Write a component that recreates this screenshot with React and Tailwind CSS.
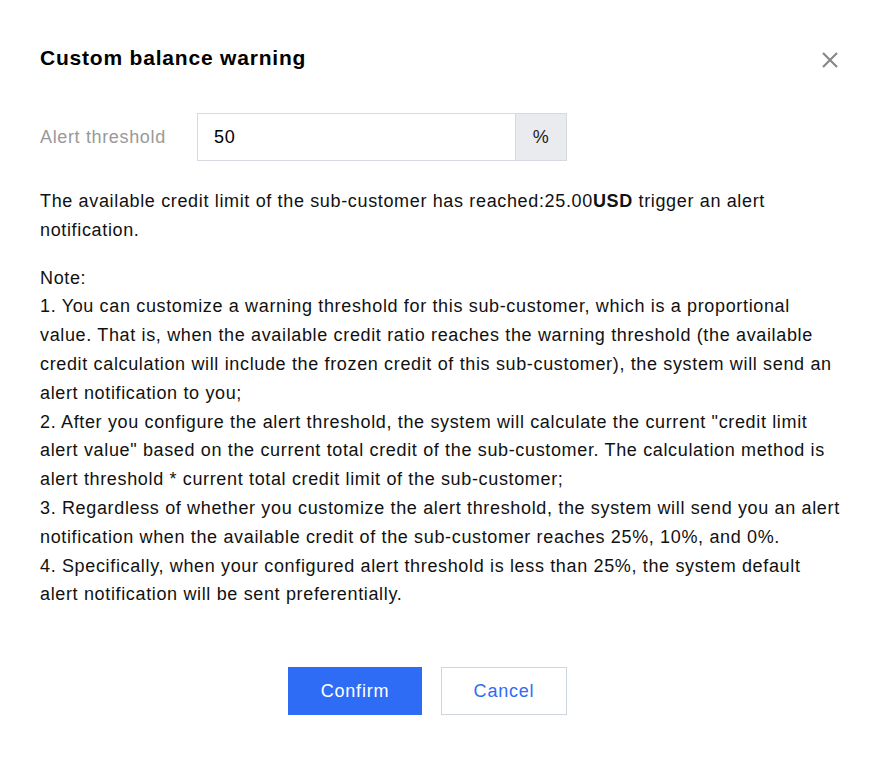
import React from "react";

const font = { fontFamily: '"Liberation Sans", Arial, Helvetica, sans-serif' };

export default function App() {
  const line = "block whitespace-nowrap";
  return (
    <div className="w-[876px] h-[776px] bg-white text-[#000] relative tracking-[0.65px]" style={font}>
      <div className="pt-[43px] pl-[40px] pr-[61px]">
        <div className="text-[21px] font-bold leading-[30px] text-black tracking-[0.8px]">Custom balance warning</div>

        <div className="mt-[40px] flex items-center h-[48px]">
          <div className="w-[157px] text-[18px] text-[#999]">Alert threshold</div>
          <div className="flex h-[48px] w-[370px] border border-[#d6dae0]">
            <div className="flex-1 flex items-center pl-[16px] text-[18px] text-black bg-white">50</div>
            <div className="w-[51px] flex items-center justify-center bg-[#e9ebee] border-l border-[#d6dae0] text-[18px] text-[#222]">%</div>
          </div>
        </div>

        <div className="mt-[26px] text-[18px] leading-[28.8px] text-[#111]">
          <span className={line}>
            The available credit limit of the sub-customer has reached:25.00<b>USD</b> trigger an alert
          </span>
          <span className={line}>notification.</span>
        </div>

        <div className="mt-[19px] text-[18px] leading-[28.8px] text-[#111]">
          <span className={line}>Note:</span>
          <span className={line}>1. You can customize a warning threshold for this sub-customer, which is a proportional</span>
          <span className={line}>value. That is, when the available credit ratio reaches the warning threshold (the available</span>
          <span className={line}>credit calculation will include the frozen credit of this sub-customer), the system will send an</span>
          <span className={line}>alert notification to you;</span>
          <span className={line}>2. After you configure the alert threshold, the system will calculate the current "credit limit</span>
          <span className={line}>alert value" based on the current total credit of the sub-customer. The calculation method is</span>
          <span className={line}>alert threshold * current total credit limit of the sub-customer;</span>
          <span className={line}>3. Regardless of whether you customize the alert threshold, the system will send you an alert</span>
          <span className={line}>notification when the available credit of the sub-customer reaches 25%, 10%, and 0%.</span>
          <span className={line}>4. Specifically, when your configured alert threshold is less than 25%, the system default</span>
          <span className={line}>alert notification will be sent preferentially.</span>
        </div>

        <div className="mt-[58px] flex justify-center gap-[19px]">
          <button className="w-[134px] h-[48px] bg-[#2f6cf5] text-white text-[18px] tracking-[0.8px]">Confirm</button>
          <button className="w-[126px] h-[48px] bg-white border border-[#cfd5de] text-[#2f6cf5] text-[18px] tracking-[0.8px]">Cancel</button>
        </div>
      </div>

      <button className="absolute left-[818px] top-[48px] w-[24px] h-[24px] flex items-center justify-center">
        <svg width="20" height="20" viewBox="0 0 20 20">
          <path d="M3 3 L17 17 M17 3 L3 17" stroke="#888" strokeWidth="2.2" fill="none" />
        </svg>
      </button>
    </div>
  );
}
